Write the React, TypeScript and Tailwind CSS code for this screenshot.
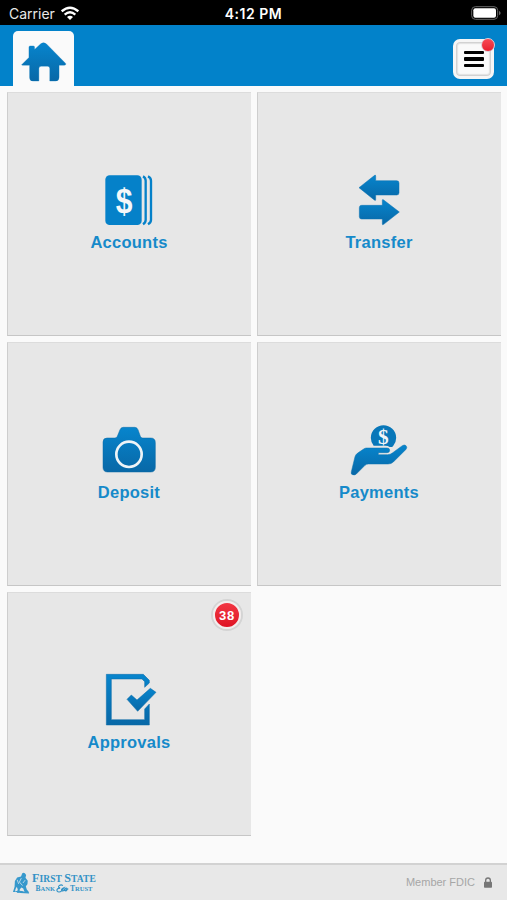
import type { ReactNode } from "react";

interface Tile {
    label: string;
    icon: ReactNode;
    badge?: number;
}

const iconBox = "57 21 180 165";

function AccountsIcon() {
    return (
        <svg viewBox={iconBox} className="h-[55px] w-[60px]">
            <rect x="76" y="31" width="109" height="149" rx="13" fill="#0581c9" />
            <path
                d="M189 34Q197 38 197 47V165Q197 173 189 178M204 34Q213 38 213 47V165Q213 173 204 178"
                fill="none"
                stroke="#0581c9"
                strokeWidth="7"
            />
            <text
                transform="translate(132 143) scale(0.92 1.08)"
                textAnchor="middle"
                fontFamily="Liberation Sans, sans-serif"
                fontWeight="bold"
                fontSize="98"
                fill="#f4f7f9"
            >
                $
            </text>
        </svg>
    );
}

function TransferIcon() {
    return (
        <svg viewBox={iconBox} className="h-[55px] w-[60px]">
            <g
                fill="url(#blueFade)"
                stroke="#0870b0"
                strokeWidth="1.5"
                strokeLinejoin="round"
            >
                <path d="M87 68L134 31Q137 29 137 33V47H200Q207 47 207 54V83Q207 90 200 90H137V104Q137 108 133 105Z" />
                <path d="M208 141L161 105Q157 102 157 106V121H95Q88 121 88 128V155Q88 162 95 162H157V177Q157 181 161 178Z" />
            </g>
        </svg>
    );
}

function DepositIcon() {
    return (
        <svg viewBox={iconBox} className="h-[55px] w-[60px]">
            <path
                d="M81 69H105Q110 69 112 64L120 44Q123 37 130 37H164Q171 37 174 44L181 64Q183 69 188 69H212Q226 69 226 83V157Q226 171 212 171H83Q69 171 69 157V81Q69 69 81 69Z"
                fill="url(#blueFade)"
                stroke="#0869a5"
                strokeWidth="1.5"
            />
            <circle
                cx="147"
                cy="118"
                r="38"
                fill="none"
                stroke="#eef4f7"
                strokeWidth="8"
            />
        </svg>
    );
}

function PaymentsIcon() {
    return (
        <svg viewBox={iconBox} className="h-[55px] w-[60px]">
            <path
                d="M132 94A38 38 0 1 1 189 94L186 96H179Q174 92 167 92H132Z"
                fill="#0877b9"
            />
            <text
                x="160"
                y="86"
                textAnchor="middle"
                fontFamily="Liberation Serif, serif"
                fontWeight="bold"
                fontSize="64"
                fill="#f0f5f8"
            >
                $
            </text>
            <path
                d="M64 170L75 125Q77 119 82 115L101 102Q105 99 110 99H171Q179 99 179 106Q179 113 171 113H145V119H173Q181 119 187 114L217 92Q223 88 228 92Q233 97 227 104L190 141Q184 147 174 147H115Q109 147 105 151L79 177Q75 181 68 179Q62 178 64 170Z"
                fill="url(#blueFade)"
                stroke="#0870ad"
                strokeWidth="1.5"
            />
        </svg>
    );
}

function ApprovalsIcon() {
    return (
        <svg viewBox={iconBox} className="h-[55px] w-[60px]">
            <path
                d="M79 28H190L208 46V54L194 67V50L186 42H94V164H194V132L208 117V180H79Z"
                fill="url(#blueFade)"
                stroke="#0869a5"
                strokeWidth="1.5"
            />
            <path
                d="M141 103L154 90L171 105L211 70L228 82L173 139Z"
                fill="url(#blueFade)"
                stroke="#0869a5"
                strokeWidth="1.5"
            />
        </svg>
    );
}

const tiles: Tile[] = [
    { label: "Accounts", icon: <AccountsIcon /> },
    { label: "Transfer", icon: <TransferIcon /> },
    { label: "Deposit", icon: <DepositIcon /> },
    { label: "Payments", icon: <PaymentsIcon /> },
    { label: "Approvals", icon: <ApprovalsIcon />, badge: 38 },
];

function StatusBar() {
    return (
        <div className="grid h-[25px] grid-cols-3 items-center bg-black pt-[2px] font-['Inter',sans-serif] text-[14px] leading-none text-[#e8e8e8]">
            <div className="flex items-center gap-[6px] pl-[9px]">
                <span>Carrier</span>
                <svg
                    viewBox="0 0 54 42"
                    className="-mt-[2px] h-[14px] w-[18px]"
                    fill="none"
                    stroke="#fff"
                    strokeWidth="7"
                >
                    <path d="M2 16Q27-6 52 16" />
                    <path d="M11 26Q27 12 43 26" />
                    <path d="M18 33Q27 26 36 33L27 42Z" fill="#fff" stroke="none" />
                </svg>
            </div>
            <span className="text-center text-[14px] font-semibold tracking-[0.5px] text-white">
                4:12 PM
            </span>
            <div className="-mt-[2px] flex justify-end pr-[6px]">
                <svg viewBox="0 0 90 42" className="h-[14px] w-[30px]">
                    <rect
                        x="2"
                        y="2"
                        width="78"
                        height="38"
                        rx="11"
                        fill="none"
                        stroke="#666"
                        strokeWidth="3"
                    />
                    <rect x="7" y="7" width="68" height="28" rx="6" fill="#fff" />
                    <path d="M84 14Q94 21 84 28Z" fill="#666" />
                </svg>
            </div>
        </div>
    );
}

function Header() {
    return (
        <header className="flex h-[61px] justify-between bg-[#0282ca] pr-[13px] pl-[13px]">
            <div className="mt-[6px] flex w-[61px] justify-center rounded-t-[5px] bg-[#fafafa]">
                <svg viewBox="60 120 140 130" className="mt-[9px] h-[43px] w-[47px]">
                    <path
                        d="M64 195L86 173V142Q86 138 90 138H99Q103 138 103 142V149L121 132Q130 124 139 132L197 191Q199 196 193 196H177V233Q177 244 166 244H149V206Q149 199 142 199H123Q116 199 116 206V244H98Q88 244 88 233V196H67Q63 196 64 195Z"
                        fill="url(#blueFade)"
                        stroke="#0877bc"
                        strokeWidth="1"
                    />
                </svg>
            </div>
            <button
                aria-label="Menu"
                className="relative mt-[14px] flex h-[40px] w-[41px] items-center justify-center rounded-[7px] border-[3px] border-[#f6f6f6] bg-[#fafafa] shadow-[inset_0_0_0_1px_#d2d2d2,inset_0_0_1px_2px_#e2e2e2]"
            >
                <span className="flex w-[20px] flex-col gap-[3px]">
                    <span className="h-[3.5px] rounded-[1px] bg-black" />
                    <span className="h-[3.5px] rounded-[1px] bg-black" />
                    <span className="h-[3.5px] rounded-[1px] bg-black" />
                </span>
                <span className="absolute -top-[4px] -right-[4px] h-[14px] w-[14px] rounded-full border border-[#e0cdd5] bg-gradient-to-b from-[#f84855] to-[#e81c2e]" />
            </button>
        </header>
    );
}

function Footer() {
    return (
        <footer className="flex h-[37px] items-center justify-between border-t-2 border-[#d2d2d2] bg-[#e8e8e8] pr-[15px] pl-[12px]">
            <div className="flex items-center gap-[2px] text-[#3292c6]">
                <svg viewBox="38 44 56 70" className="h-[24px] w-[18px]" fill="#3698cc">
                    <path d="M70 49Q74 45 78 49L82 54L80 63L87 72L86 83L81 89L84 99L90 106L88 110L77 107L73 96L67 93L62 99L61 109H53L56 99L53 91L49 98L47 107H41L46 91L47 73L54 62L66 59Z" />
                    <path d="M43 105Q63 100 79 107L91 108V112L64 110Z" />
                    <path
                        d="M54 69L59 82M67 64L61 76L71 87M79 70L72 79"
                        fill="none"
                        stroke="#d3e4ee"
                        strokeWidth="2.5"
                    />
                </svg>
                <div className="flex flex-col items-center font-['Liberation_Serif',serif] leading-none whitespace-nowrap">
                    <span className="text-[9.5px] font-bold tracking-[0.1px]">
                        <span className="text-[12px]">F</span>IRST{" "}
                        <span className="text-[12px]">S</span>TATE
                    </span>
                    <span className="-mt-px flex h-[9px] items-center text-[6.5px] font-bold">
                        <span><span className="text-[7.5px]">B</span>ANK</span>
                        {/* script ampersand */}
                        <svg viewBox="170 84 38 26" className="mx-px h-[9px] w-[13px]">
                            <path
                                d="M190 89Q186 84 180 88Q174 93 182 96Q171 97 173 104Q178 111 187 103L193 95Q184 99 187 103Q190 107 195 99Q201 93 203 99Q201 106 195 103L206 98"
                                fill="none"
                                stroke="#3292c6"
                                strokeWidth="3.2"
                            />
                        </svg>
                        <span><span className="text-[7.5px]">T</span>RUST</span>
                    </span>
                </div>
            </div>
            <div className="flex items-center gap-[9px] text-[11px] text-[#a6a6a6]">
                <span>Member FDIC</span>
                <svg viewBox="0 0 24 33" className="h-[11px] w-[8px]">
                    <path
                        d="M5 16V10Q5 3 12 3Q19 3 19 10V16"
                        fill="none"
                        stroke="#777"
                        strokeWidth="4"
                    />
                    <rect y="14" width="24" height="18" rx="2" fill="#777" />
                </svg>
            </div>
        </footer>
    );
}

export default function App() {
    return (
        <div className="flex h-[900px] w-[507px] flex-col overflow-hidden bg-[#fafafa] font-['Liberation_Sans',sans-serif]">
            <svg className="absolute h-0 w-0">
                <defs>
                    <linearGradient id="blueFade" x1="0" y1="0" x2="0" y2="1">
                        <stop offset="0" stopColor="#0785cd" />
                        <stop offset="1" stopColor="#0868a7" />
                    </linearGradient>
                </defs>
            </svg>
            <StatusBar />
            <Header />
            <main className="grid flex-1 auto-rows-[244px] grid-cols-[244px_244px] content-start gap-[6px] pt-[6px] pl-[7px]">
                {tiles.map((tile) => (
                    <div
                        key={tile.label}
                        className="relative flex flex-col items-center border-t border-b border-l border-t-[#dcdcdc] border-b-[#c6c6c6] border-l-[#cecece] bg-[#e7e7e7] pt-[79px] pr-px"
                    >
                        {tile.icon}
                        <span className="mt-[3px] text-[16.5px] leading-[24px] font-bold tracking-[0.25px] text-[#168aca]">
                            {tile.label}
                        </span>
                        {tile.badge && (
                            <span className="absolute top-[8px] right-[10px] flex h-[28px] w-[28px] items-center justify-center rounded-full border-2 border-[#f3eded] bg-gradient-to-b from-[#f23643] to-[#df1023] text-[13px] leading-none font-bold tracking-[0.8px] text-white shadow-[0_0_0_2px_#d4d4d4]">
                                {tile.badge}
                            </span>
                        )}
                    </div>
                ))}
            </main>
            <Footer />
        </div>
    );
}
